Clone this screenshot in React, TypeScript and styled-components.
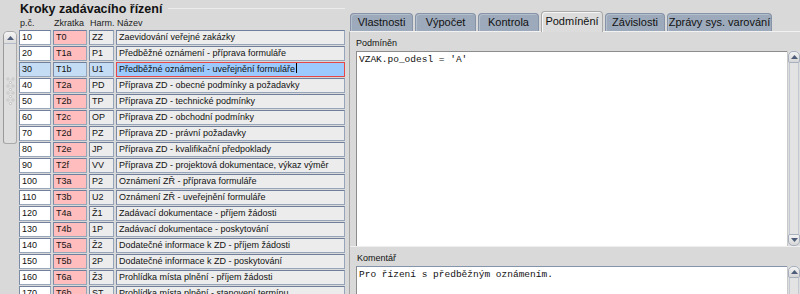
import React from "react";
import styled, { createGlobalStyle } from "styled-components";

const GlobalStyle = createGlobalStyle`
  html, body {
    margin: 0;
    padding: 0;
  }
  body {
    background: #d9d9d9;
    font-family: "Liberation Sans", Arial, sans-serif;
  }
`;

const Window = styled.div`
  width: 800px;
  height: 294px;
  overflow: hidden;
  display: flex;
  background: #d9d9d9;
`;

/* ---------- left side: list of steps ---------- */

const LeftPane = styled.div`
  width: 349px;
  flex: none;
  display: flex;
  flex-direction: column;
`;

const TitleRow = styled.div`
  height: 18px;
  display: flex;
  align-items: flex-start;
  padding-left: 20px;
`;

const Title = styled.div`
  font-size: 12.5px;
  font-weight: bold;
  line-height: 18px;
  color: #111;
  white-space: nowrap;
`;

const TitleRule = styled.div`
  flex: 1;
  margin: 8px 4px 0 6px;
  border-top: 1px solid #ececec;
`;

const COLS = "32px 34px 25px 229px";

const HeaderRow = styled.div`
  height: 12px;
  display: grid;
  grid-template-columns: ${COLS};
  column-gap: 2px;
  padding-left: 19px;
  align-items: end;
  font-size: 9px;
  line-height: 11px;
  color: #222;
`;

const HeaderLabel = styled.div`
  padding-left: 1px;
  white-space: nowrap;
`;

const Body = styled.div`
  display: flex;
  flex: 1;
`;

const Gutter = styled.div`
  width: 19px;
  flex: none;
  padding-top: 2px;
`;

const Thumb = styled.div`
  margin-left: 3px;
  width: 14px;
  height: 113px;
  box-sizing: border-box;
  border: 1px solid #a9a9a9;
  border-left-color: #9a9a9a;
  border-radius: 5px 5px 3px 3px;
  background: #dedede;
  display: flex;
  flex-direction: column;
  align-items: center;
`;

const ThumbButton = styled.div`
  width: 100%;
  height: 12px;
  box-sizing: border-box;
  border-bottom: 1px solid #b4bcc8;
  border-radius: 4px 4px 0 0;
  background: linear-gradient(#f4f4f4, #dcdcdc);
  display: flex;
  align-items: center;
  justify-content: center;
`;

const Grip = styled.svg`
  margin-top: 32px;
`;

const Rows = styled.div`
  display: flex;
  flex-direction: column;
  gap: 1px;
  padding-top: 1px;
`;

const Row = styled.div`
  display: grid;
  grid-template-columns: ${COLS};
  column-gap: 2px;
  height: 15px;
`;

type Tone = "white" | "pink" | "gray" | "selLight" | "selStrong";

const toneBg: Record<Tone, string> = {
  white: "#ffffff",
  pink: "#ffbdbd",
  gray: "#ececec",
  selLight: "#c4dcf4",
  selStrong: "#9ccaff",
};

const Cell = styled.div<{ $tone: Tone }>`
  box-sizing: border-box;
  height: 15px;
  padding: 0 2px;
  background: ${(p) => toneBg[p.$tone]};
  border: 1px solid ${(p) => (p.$tone === "selStrong" ? "#e64646" : "#97a5bb")};
  border-top-color: ${(p) => (p.$tone === "selStrong" ? "#e64646" : "#6f7f9c")};
  border-left-color: ${(p) => (p.$tone === "selStrong" ? "#e64646" : "#7b8ba6")};
  font-size: 9px;
  line-height: 13px;
  color: #111;
  white-space: nowrap;
  overflow: hidden;
`;

const Caret = styled.span`
  display: inline-block;
  width: 1px;
  height: 10px;
  margin-left: 1px;
  background: #000;
  vertical-align: -1px;
`;

/* ---------- right side: tabs ---------- */

const RightPane = styled.div`
  flex: 1;
  display: flex;
  flex-direction: column;
  min-width: 0;
`;

const TabBar = styled.div`
  height: 31px;
  flex: none;
  display: flex;
  align-items: flex-end;
  gap: 2px;
  padding-left: 1px;
  position: relative;
  z-index: 1;
`;

const Tab = styled.div<{ $w: number; $active?: boolean }>`
  width: ${(p) => p.$w}px;
  height: ${(p) => (p.$active ? 21 : 18)}px;
  margin-bottom: ${(p) => (p.$active ? -1 : 0)}px;
  box-sizing: border-box;
  border: 1px solid ${(p) => (p.$active ? "#a9a9a9" : "#8793a6")};
  border-bottom: none;
  border-radius: 4px 4px 0 0;
  background: ${(p) => (p.$active ? "#dcdcdc" : "#9daabb")};
  box-shadow: inset 1px 1px 0 ${(p) => (p.$active ? "#f6f6f6" : "#b4bfcd")};
  font-size: 11px;
  line-height: ${(p) => (p.$active ? 19 : 17)}px;
  text-align: center;
  color: #111;
  white-space: nowrap;
`;

const Panel = styled.div`
  flex: 1;
  display: flex;
  flex-direction: column;
  border-left: 1px solid #a4a4a4;
  border-top: 1px solid #f2f2f2;
  padding-left: 6px;
`;

const FieldLabel = styled.div<{ $h: number; $top: number }>`
  height: ${(p) => p.$h}px;
  flex: none;
  box-sizing: border-box;
  padding-top: ${(p) => p.$top}px;
  font-size: 9px;
  line-height: 12px;
  color: #111;
`;

const Splitter = styled(FieldLabel)`
  margin-left: -6px;
  padding-left: 7px;
  border-top: 1px solid #efefef;
`;

const Editor = styled.div<{ $h?: number }>`
  display: flex;
  flex: ${(p) => (p.$h ? "none" : "1")};
  height: ${(p) => (p.$h ? `${p.$h}px` : "auto")};
  min-height: 0;
`;

const TextBox = styled.div<{ $edge: string }>`
  flex: 1;
  background: #fff;
  border-top: 1px solid ${(p) => p.$edge};
  border-left: 1px solid #8c8c8c;
  padding: 1px 2px;
  font-family: "Liberation Mono", "Courier New", monospace;
  font-size: 9.5px;
  line-height: 13px;
  color: #111;
  white-space: pre;
`;

const VScroll = styled.div`
  width: 13px;
  flex: none;
  display: flex;
  flex-direction: column;
  background: #dddddd;
  border-left: 1px solid #c9c9c9;
  box-sizing: border-box;
`;

const ScrollButton = styled.div<{ $down?: boolean }>`
  height: 12px;
  flex: none;
  box-sizing: border-box;
  border: 1px solid #a7b0bf;
  border-radius: ${(p) => (p.$down ? "2px 2px 5px 5px" : "5px 5px 2px 2px")};
  background: linear-gradient(#f3f3f3, #d6d6d6);
  display: flex;
  align-items: center;
  justify-content: center;
`;

const Track = styled.div`
  flex: 1;
  margin: 0 1px;
  border-left: 1px solid #c3c9d3;
  border-right: 1px solid #c3c9d3;
  background: #e3e3e3;
`;

const Arrow = ({ down }: { down?: boolean }) => (
  <svg width="7" height="4" viewBox="0 0 7 4">
    <path d={down ? "M0 0 L7 0 L3.5 4 Z" : "M0 4 L7 4 L3.5 0 Z"} fill="#4d5c78" />
  </svg>
);

const Scrollbar = ({ down }: { down?: boolean }) => (
  <VScroll>
    <ScrollButton>
      <Arrow />
    </ScrollButton>
    <Track />
    {down && (
      <ScrollButton $down>
        <Arrow down />
      </ScrollButton>
    )}
  </VScroll>
);

const steps: [string, string, string, string][] = [
  ["10", "T0", "ZZ", "Zaevidování veřejné zakázky"],
  ["20", "T1a", "P1", "Předběžné oznámení - příprava formuláře"],
  ["30", "T1b", "U1", "Předběžné oznámení - uveřejnění formuláře"],
  ["40", "T2a", "PD", "Příprava ZD - obecné podmínky a požadavky"],
  ["50", "T2b", "TP", "Příprava ZD - technické podmínky"],
  ["60", "T2c", "OP", "Příprava ZD - obchodní podmínky"],
  ["70", "T2d", "PZ", "Příprava ZD - právní požadavky"],
  ["80", "T2e", "JP", "Příprava ZD - kvalifikační předpoklady"],
  ["90", "T2f", "VV", "Příprava ZD - projektová dokumentace, výkaz výměr"],
  ["100", "T3a", "P2", "Oznámení ZŘ - příprava formuláře"],
  ["110", "T3b", "U2", "Oznámení ZŘ - uveřejnění formuláře"],
  ["120", "T4a", "Ž1", "Zadávací dokumentace - příjem žádosti"],
  ["130", "T4b", "1P", "Zadávací dokumentace - poskytování"],
  ["140", "T5a", "Ž2", "Dodatečné informace k ZD - příjem žádosti"],
  ["150", "T5b", "2P", "Dodatečné informace k ZD - poskytování"],
  ["160", "T6a", "Ž3", "Prohlídka místa plnění - příjem žádosti"],
  ["170", "T6b", "ST", "Prohlídka místa plnění - stanovení termínu"],
];

const SELECTED = 2;

const tabs = [
  { label: "Vlastnosti", w: 63 },
  { label: "Výpočet", w: 61 },
  { label: "Kontrola", w: 61 },
  { label: "Podmínění", w: 62, active: true },
  { label: "Závislosti", w: 60 },
  { label: "Zprávy sys. varování", w: 105 },
];

export default function App() {
  return (
    <>
      <GlobalStyle />
      <Window>
        <LeftPane>
          <TitleRow>
            <Title>Kroky zadávacího řízení</Title>
            <TitleRule />
          </TitleRow>
          <HeaderRow>
            <HeaderLabel>p.č.</HeaderLabel>
            <HeaderLabel>Zkratka</HeaderLabel>
            <HeaderLabel>Harm.</HeaderLabel>
            <HeaderLabel>Název</HeaderLabel>
          </HeaderRow>
          <Body>
            <Gutter>
              <Thumb>
                <ThumbButton>
                  <Arrow />
                </ThumbButton>
                <Grip width="9" height="30" viewBox="0 0 9 30">
                  {[0, 1, 2, 3].map((i) => (
                    <g key={i} fill="#f8f8f8" stroke="#a8a8a8" strokeWidth="0.6">
                      <circle cx="2" cy={3 + i * 7} r="1.1" />
                      <circle cx="7" cy={3 + i * 7} r="1.1" />
                      <circle cx="4.5" cy={6.5 + i * 7} r="1.1" />
                    </g>
                  ))}
                </Grip>
              </Thumb>
            </Gutter>
            <Rows>
              {steps.map(([no, code, harm, name], i) => {
                const sel = i === SELECTED;
                return (
                  <Row key={no}>
                    <Cell $tone={sel ? "selLight" : "white"}>{no}</Cell>
                    <Cell $tone={sel ? "selLight" : "pink"}>{code}</Cell>
                    <Cell $tone={sel ? "selLight" : "gray"}>{harm}</Cell>
                    <Cell $tone={sel ? "selStrong" : "gray"}>
                      {name}
                      {sel && <Caret />}
                    </Cell>
                  </Row>
                );
              })}
            </Rows>
          </Body>
        </LeftPane>

        <RightPane>
          <TabBar>
            {tabs.map((t) => (
              <Tab key={t.label} $w={t.w} $active={t.active}>
                {t.label}
              </Tab>
            ))}
          </TabBar>
          <Panel>
            <FieldLabel $h={19} $top={5}>
              Podmíněn
            </FieldLabel>
            <Editor $h={195}>
              <TextBox $edge="#8c8c8c">VZAK.po_odesl = 'A'</TextBox>
              <Scrollbar down />
            </Editor>
            <Splitter $h={20} $top={5}>
              Komentář
            </Splitter>
            <Editor>
              <TextBox $edge="#8594ab">Pro řízení s předběžným oznámením.</TextBox>
              <Scrollbar />
            </Editor>
          </Panel>
        </RightPane>
      </Window>
    </>
  );
}
